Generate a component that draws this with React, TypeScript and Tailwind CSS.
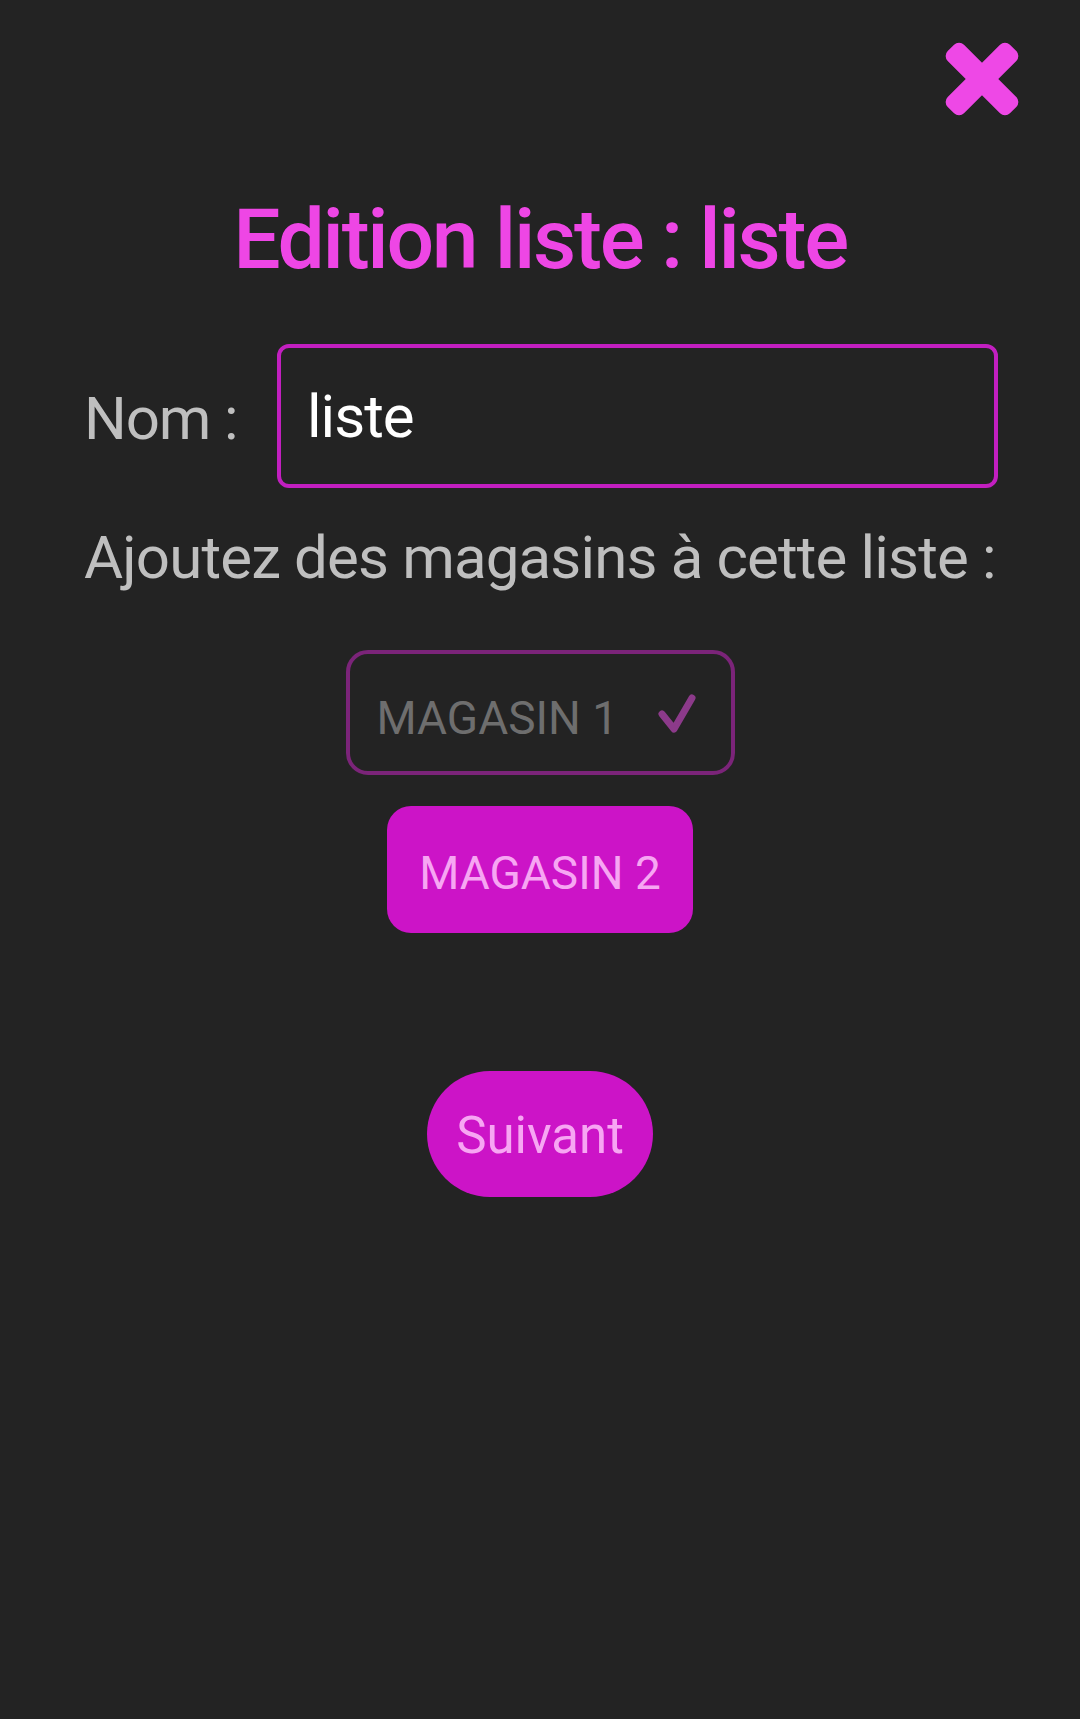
import React from "react";

function CloseIcon() {
  return (
    <svg width="74" height="74" viewBox="0 0 74 74" style={{ overflow: "visible" }}>
      <rect x="-7" y="25.5" width="88" height="23" rx="7" fill="#ee48e6" transform="rotate(45 37 37)" />
      <rect x="-7" y="25.5" width="88" height="23" rx="7" fill="#ee48e6" transform="rotate(-45 37 37)" />
    </svg>
  );
}

function Check() {
  return (
    <svg width="40" height="42" viewBox="0 0 40 42" className="ml-[39px] -mt-[8px]">
      <path d="M5 21 L17 36 L35 5" fill="none" stroke="#8c3a8a" strokeWidth="7" strokeLinecap="round" strokeLinejoin="round" />
    </svg>
  );
}

export default function App() {
  return (
    <div
      className="w-[1080px] min-h-[1719px] bg-[#232323] flex flex-col"
      style={{ fontFamily: "Roboto, 'Noto Sans', sans-serif" }}
    >
      <div className="flex justify-end pt-[42px] pr-[61px]">
        <CloseIcon />
      </div>

      <h1 className="mt-[82px] text-center text-[84px] leading-none font-medium text-[#ee46e5] tracking-[-2.3px]">
        Edition liste : liste
      </h1>

      <div className="mt-[62px] flex items-center pl-[84px] pr-[82px]">
        <div className="w-[193px] text-[60px] leading-none text-[#bfbfbf] pt-[6px] tracking-[-1.1px]">Nom :</div>
        <div className="flex-1 h-[144px] rounded-[12px] border-[4.5px] border-[#c21fc0] flex items-center pl-[26px]">
          <span className="text-[60px] leading-none text-white pt-[2px] tracking-[-1px]">liste</span>
        </div>
      </div>

      <p className="mt-[40px] pl-[84px] text-[60px] leading-none text-[#bfbfbf] tracking-[-0.85px]">
        Ajoutez des magasins à cette liste :
      </p>

      <div className="mt-[62px] flex flex-col items-center">
        <div className="w-[389px] h-[125px] rounded-[22px] border-[4.5px] border-[#7b2479] flex items-center pl-[27px] pt-[10px]">
          <span className="text-[46px] leading-none text-[#6e6e6e]">MAGASIN 1</span>
          <Check />
        </div>

        <div className="mt-[31px] w-[306px] h-[127px] rounded-[24px] bg-[#cc14c7] flex items-center justify-center pt-[6px]">
          <span className="text-[46px] leading-none text-[#f7a6f3]">MAGASIN 2</span>
        </div>

        <div className="mt-[138px] w-[226px] h-[126px] rounded-full bg-[#cc14c7] flex items-center justify-center pt-[3px]">
          <span className="text-[51px] leading-none text-[#f7a6f3]">Suivant</span>
        </div>
      </div>
    </div>
  );
}
